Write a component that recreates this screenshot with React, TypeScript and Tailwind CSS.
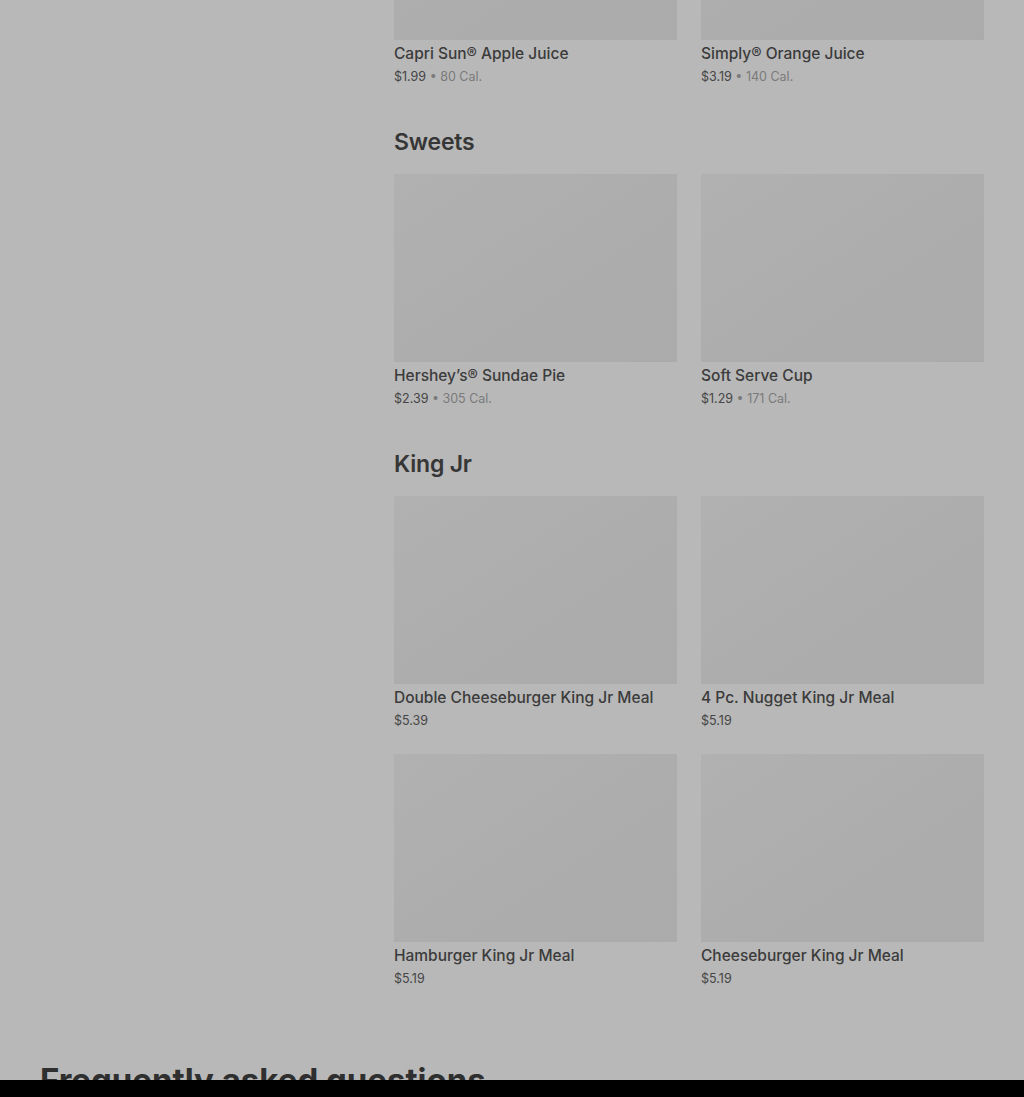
import React from 'react'

type Item = { name: string; price: string; cal?: string }

const drinks: Item[] = [
  { name: 'Capri Sun® Apple Juice', price: '$1.99', cal: '80 Cal.' },
  { name: 'Simply® Orange Juice', price: '$3.19', cal: '140 Cal.' },
]

const sweets: Item[] = [
  { name: 'Hershey’s® Sundae Pie', price: '$2.39', cal: '305 Cal.' },
  { name: 'Soft Serve Cup', price: '$1.29', cal: '171 Cal.' },
]

const kingJr: Item[] = [
  { name: 'Double Cheeseburger King Jr Meal', price: '$5.39' },
  { name: '4 Pc. Nugget King Jr Meal', price: '$5.19' },
  { name: 'Hamburger King Jr Meal', price: '$5.19' },
  { name: 'Cheeseburger King Jr Meal', price: '$5.19' },
]

function ItemCard({ item }: { item: Item }) {
  return (
    <div className="flex flex-col">
      <div className="h-[188px] w-full bg-gradient-to-br from-[#b1b1b1] via-[#adadad] to-[#ababab]" />
      <p className="mt-[4px] text-[15.5px] leading-[20px] font-medium text-[#3b3b3b] truncate">
        {item.name}
      </p>
      <p className="mt-[3px] text-[12.5px] leading-[19px] text-[#454545]">
        {item.price}
        {item.cal && <span className="text-[#7a7a7a]"> • {item.cal}</span>}
      </p>
    </div>
  )
}

function Section({ title, items }: { title?: string; items: Item[] }) {
  return (
    <section className="flex flex-col">
      {title && (
        <h2 className="mb-4 text-[23px] leading-[32px] font-semibold tracking-[-0.2px] text-[#363636]">
          {title}
        </h2>
      )}
      <div className="grid grid-cols-2 gap-6">
        {items.map((item) => (
          <ItemCard key={item.name} item={item} />
        ))}
      </div>
    </section>
  )
}

export default function App() {
  return (
    <div
      className="min-h-screen overflow-hidden bg-[#b8b8b8] px-10"
      style={{ fontFamily: 'Inter, "Liberation Sans", sans-serif' }}
    >
      <div className="flex gap-6 -mt-[148px]">
        {/* Sidebar (empty in this view) */}
        <aside className="w-[330px] shrink-0" />

        {/* Menu */}
        <main className="flex w-[590px] flex-col gap-10">
          <Section items={drinks} />
          <Section title="Sweets" items={sweets} />
          <Section title="King Jr" items={kingJr} />
        </main>
      </div>

      <h2 className="mt-[72px] pb-10 text-[33px] leading-[40px] font-bold text-[#2f2f2f]">
        Frequently asked questions
      </h2>

      <div className="fixed bottom-0 left-0 h-[17px] w-full bg-black" />
    </div>
  )
}
